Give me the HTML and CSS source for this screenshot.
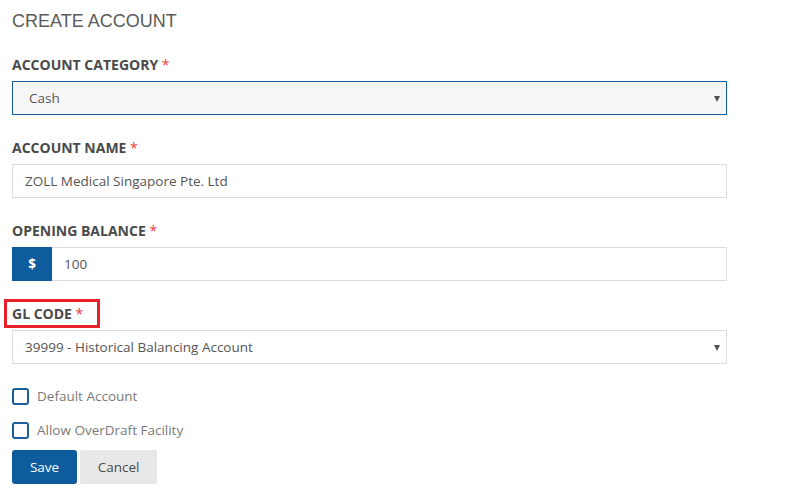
FILE: index.html
```html
<!DOCTYPE html>
<html>
<head>
<meta charset="utf-8">
<link rel="stylesheet" href="styles.css">
</head>
<body>
<div class="page">
  <h1 class="title">CREATE ACCOUNT</h1>

  <div class="group">
    <label class="label">ACCOUNT CATEGORY <span class="req">*</span></label>
    <div class="control select focused"><span class="value">Cash</span><span class="caret"></span></div>
  </div>

  <div class="group">
    <label class="label">ACCOUNT NAME <span class="req">*</span></label>
    <div class="control"><span class="value">ZOLL Medical Singapore Pte. Ltd</span></div>
  </div>

  <div class="group">
    <label class="label">OPENING BALANCE <span class="req">*</span></label>
    <div class="input-group">
      <span class="addon">$</span>
      <div class="control grow"><span class="value">100</span></div>
    </div>
  </div>

  <div class="group last">
    <div class="label-row"><label class="label highlighted">GL CODE <span class="req">*</span></label></div>
    <div class="control select"><span class="value">39999 - Historical Balancing Account</span><span class="caret"></span></div>
  </div>

  <div class="checks">
    <div class="check-row"><span class="box"></span><span class="check-label">Default Account</span></div>
    <div class="check-row"><span class="box"></span><span class="check-label">Allow OverDraft Facility</span></div>
  </div>

  <div class="buttons">
    <button class="btn primary">Save</button>
    <button class="btn secondary">Cancel</button>
  </div>
</div>
</body>
</html>
```

FILE: styles.css
```css
html, body {
  margin: 0;
  padding: 0;
  background: #ffffff;
}

.page {
  width: 715px;
  padding: 10px 0 0 12px;
  font-family: "Open Sans", "Noto Sans", sans-serif;
  font-size: 13.5px;
}

.title {
  margin: 0 0 24px 0;
  font-family: "Liberation Sans", Arial, sans-serif;
  font-weight: normal;
  font-size: 18px;
  line-height: 22px;
  color: #5b5b5b;
}

.group {
  display: flex;
  flex-direction: column;
  margin-bottom: 24px;
}

.group.last {
  margin-bottom: 15px;
}

.label {
  display: block;
  font-weight: bold;
  font-size: 14px;
  line-height: 20px;
  color: #4a4a4a;
  margin-bottom: 5px;
  margin-top: -1px;
  padding-bottom: 1px;
}

.label-row {
  display: flex;
}

.label.highlighted {
  margin: -6px 0 2px -8px;
  padding: 2px 14px 1px 5px;
  border: 3px solid #e8202a;
}

.req {
  color: #ef3b3b;
  font-weight: normal;
}

.control {
  display: flex;
  align-items: center;
  height: 34px;
  box-sizing: border-box;
  border: 1px solid #dcdcdc;
  background: #ffffff;
  padding: 0 6px 0 12px;
  color: #555555;
  font-size: 13.5px;
}

.control.select.focused {
  border-color: #135f9e;
  background: #f6f6f6;
  padding-left: 16px;
}

.value {
  flex: 1;
}

.caret {
  width: 0;
  height: 0;
  border-left: 3px solid transparent;
  border-right: 3px solid transparent;
  border-top: 6px solid #505050;
  margin-top: 1px;
}

.input-group {
  display: flex;
  height: 34px;
}

.addon {
  width: 40px;
  display: flex;
  align-items: center;
  justify-content: center;
  background: #0e5c9e;
  color: #ffffff;
  font-weight: bold;
  font-size: 13.5px;
}

.control.grow {
  flex: 1;
  border-left: none;
}

.checks {
  display: flex;
  flex-direction: column;
}

.check-row {
  display: flex;
  align-items: center;
  height: 34px;
}

.box {
  width: 17px;
  height: 17px;
  box-sizing: border-box;
  border: 2px solid #1a5e9c;
  border-radius: 3px;
  margin-right: 8px;
}

.check-label {
  color: #7a7a7a;
  font-size: 13.5px;
}

.buttons {
  display: flex;
  gap: 3px;
  margin-top: 3px;
}

.btn {
  height: 34px;
  border: none;
  font-family: "Open Sans", "Noto Sans", sans-serif;
  font-size: 13.5px;
  padding: 0;
}

.btn.primary {
  width: 65px;
  background: #0e5c9e;
  color: #ffffff;
  border-radius: 3px;
}

.btn.secondary {
  width: 77px;
  background: #e8e8e8;
  color: #4a4a4a;
  border-radius: 2px;
}
```
